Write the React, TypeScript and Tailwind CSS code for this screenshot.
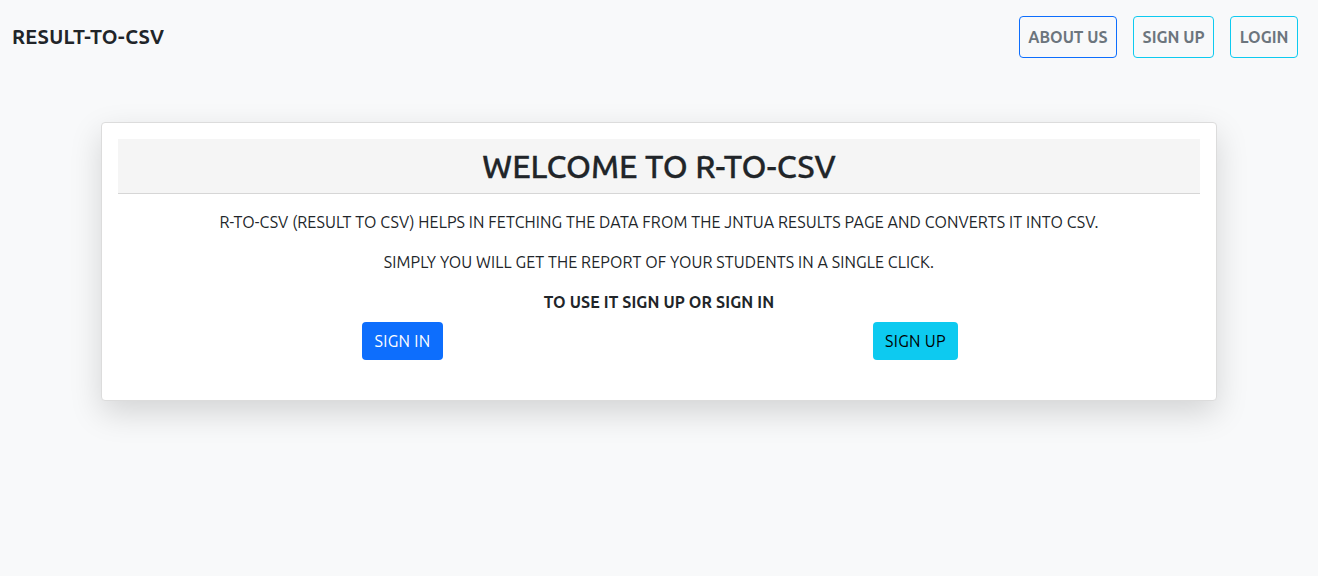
import React from "react";

const App = () => {
  return (
    <div
      className="min-h-screen bg-[#f8f9fa] text-[#212529]"
      style={{ fontFamily: "Ubuntu, 'Open Sans', 'Noto Sans', sans-serif" }}
    >
      {/* Navbar */}
      <nav className="flex items-center justify-between h-[74px] pl-3 pr-5">
        <span className="text-[20px] font-bold tracking-[0.25px]">RESULT-TO-CSV</span>
        <div className="flex gap-4">
          <button className="h-[42px] px-[8.5px] rounded border border-[#0d6efd] text-[#6c757d] font-bold text-[16px]">
            ABOUT US
          </button>
          <button className="h-[42px] px-[8.5px] rounded border border-[#0dcaf0] text-[#6c757d] font-bold text-[16px]">
            SIGN UP
          </button>
          <button className="h-[42px] px-[8.5px] rounded border border-[#0dcaf0] text-[#6c757d] font-bold text-[16px]">
            LOGIN
          </button>
        </div>
      </nav>

      {/* Card */}
      <div className="mx-[101px] mt-[48px] bg-white border border-[#dcdcdc] rounded shadow-[0_12px_32px_rgba(0,0,0,0.15)] p-4 pb-[40px]">
        <div className="bg-[#f5f5f5] border-b border-[#d6d6d6] py-2 text-center">
          <h1 className="text-[32px] font-medium leading-[38px] [-webkit-text-stroke:0.3px_#212529]">
            WELCOME TO R-TO-CSV
          </h1>
        </div>
        <div className="text-center text-[16px] leading-6 mt-4 tracking-[0.1px]">
          <p className="mb-4">
            R-TO-CSV (RESULT TO CSV) HELPS IN FETCHING THE DATA FROM THE JNTUA RESULTS PAGE AND CONVERTS IT INTO CSV.
          </p>
          <p className="mb-4">SIMPLY YOU WILL GET THE REPORT OF YOUR STUDENTS IN A SINGLE CLICK.</p>
          <p className="font-bold">TO USE IT SIGN UP OR SIGN IN</p>
        </div>
        <div className="w-[1026px] mx-auto grid grid-cols-2 mt-2">
          <div className="flex justify-center">
            <button className="h-[38px] w-[81px] rounded bg-[#0d6efd] text-white text-[16px] tracking-[0.3px]">
              SIGN IN
            </button>
          </div>
          <div className="flex justify-center">
            <button className="h-[38px] w-[85px] rounded bg-[#0dcaf0] text-black text-[16px] tracking-[0.3px]">
              SIGN UP
            </button>
          </div>
        </div>
      </div>
    </div>
  );
};

export default App;
